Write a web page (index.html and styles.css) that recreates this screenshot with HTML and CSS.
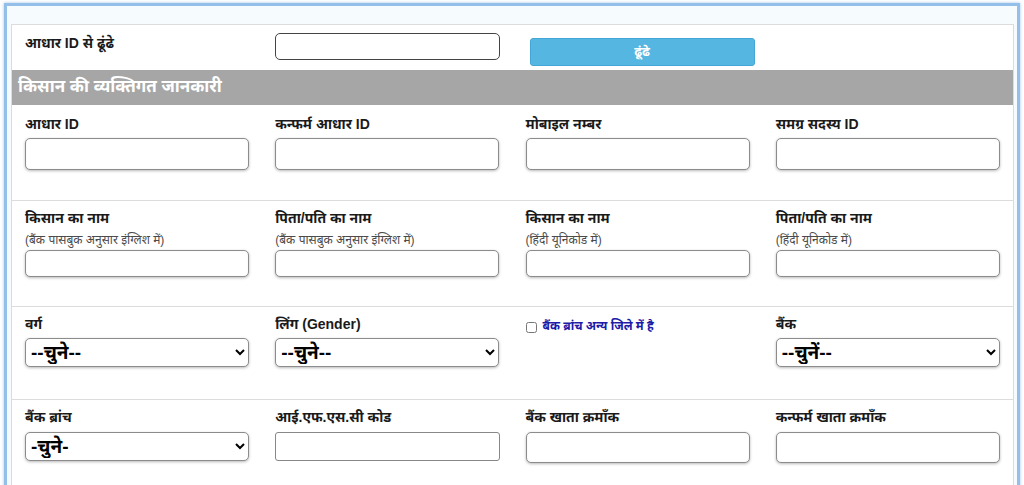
FILE: index.html
```html
<!DOCTYPE html>
<html lang="hi">
<head>
<meta charset="utf-8">
<title>किसान पंजीकरण</title>
<link rel="stylesheet" href="styles.css">
</head>
<body>
<div class="frame">
  <div class="sheet">
    <div class="row row-search">
      <div class="cell"><div class="label">आधार ID से ढूंढे</div></div>
      <div class="cell"><input class="plain search-input" type="text"></div>
      <div class="cell"><button class="btn" type="button">ढूंढे</button></div>
      <div class="cell"></div>
    </div>
    <div class="section-head">किसान की व्यक्तिगत जानकारी</div>
    <div class="row row-a">
      <div class="cell"><div class="label">आधार ID</div><input class="field tall" type="text"></div>
      <div class="cell"><div class="label">कन्फर्म आधार ID</div><input class="field tall" type="text"></div>
      <div class="cell"><div class="label">मोबाइल नम्बर</div><input class="field tall" type="text"></div>
      <div class="cell"><div class="label">समग्र सदस्य ID</div><input class="field tall" type="text"></div>
    </div>
    <div class="row row-b">
      <div class="cell"><div class="label">किसान का नाम</div><div class="sub">(बैंक पासबुक अनुसार इंग्लिश में)</div><input class="field short" type="text"></div>
      <div class="cell"><div class="label">पिता/पति का नाम</div><div class="sub">(बैंक पासबुक अनुसार इंग्लिश में)</div><input class="field short" type="text"></div>
      <div class="cell"><div class="label">किसान का नाम</div><div class="sub">(हिंदी यूनिकोड में)</div><input class="field short" type="text"></div>
      <div class="cell"><div class="label">पिता/पति का नाम</div><div class="sub">(हिंदी यूनिकोड में)</div><input class="field short" type="text"></div>
    </div>
    <div class="row row-c">
      <div class="cell"><div class="label">वर्ग</div><select class="pick"><option>--चुने--</option></select></div>
      <div class="cell"><div class="label">लिंग (Gender)</div><select class="pick"><option>--चुने--</option></select></div>
      <div class="cell"><label class="check"><input type="checkbox" class="box"><span>बैंक ब्रांच अन्य जिले में है</span></label></div>
      <div class="cell"><div class="label">बैंक</div><select class="pick"><option>--चुनें--</option></select></div>
    </div>
    <div class="row row-d">
      <div class="cell"><div class="label">बैंक ब्रांच</div><select class="pick"><option>-चुने-</option></select></div>
      <div class="cell"><div class="label">आई.एफ.एस.सी कोड</div><input class="plain ifsc" type="text"></div>
      <div class="cell"><div class="label">बैंक खाता क्रमाँक</div><input class="field tall" type="text"></div>
      <div class="cell"><div class="label">कन्फर्म खाता क्रमाँक</div><input class="field tall" type="text"></div>
    </div>
  </div>
</div>
</body>
</html>
```
FILE: styles.css
```css
html, body {
  margin: 0;
  padding: 0;
  background: #ffffff;
  font-family: "Liberation Sans", "Noto Sans Devanagari", "Noto Sans", Arial, sans-serif;
  color: #111;
  overflow: hidden;
}

.frame {
  margin: 3px 4px 0 4px;
  border: 3px solid #93bfe9;
  border-bottom: none;
  box-shadow: 0 0 3px rgba(120, 170, 225, 0.7);
  background: #f6fbfe;
  padding: 18px 3px 0 4px;
  height: 600px;
}

.sheet {
  background: #fff;
  border: 1px solid #dcdcdc;
  border-bottom: none;
  min-height: 700px;
}

.row {
  display: grid;
  grid-template-columns: repeat(4, 1fr);
  border-top: 1px solid #dcdcdc;
}

.row-search { border-top: none; padding: 8px 0 9px; height: 28px; }
.row-a { border-top: none; padding: 9px 0 30px; }
.row-b { padding: 7px 0 29px; }
.row-c { padding: 7px 0 32px; }
.row-d { padding: 7px 0 40px; }

.cell {
  padding: 0 13px;
  min-width: 0;
}

.label {
  font-weight: bold;
  font-size: 14px;
  line-height: 20px;
  color: #1a1a1a;
  white-space: nowrap;
}

.sub {
  font-size: 12px;
  line-height: 16px;
  color: #4a4a4a;
  margin-top: 4px;
  white-space: nowrap;
}

.field {
  display: block;
  box-sizing: border-box;
  width: 224px;
  border: 1px solid #8c8c8c;
  border-radius: 5px;
  background: #fff;
  box-shadow: 0 1px 3px rgba(0, 0, 0, 0.28), inset 0 0 2px rgba(0, 0, 0, 0.06);
  margin: 4px 0 0;
  padding: 0 6px;
  font: 14px "Liberation Sans", sans-serif;
}

.tall { height: 32px; }
.short { height: 27px; margin-top: 2px; }
.row-d .tall { height: 31px; margin-top: 5px; }

.plain {
  display: block;
  box-sizing: border-box;
  width: 225px;
  height: 27px;
  border: 1px solid #444;
  border-radius: 5px;
  background: #fff;
  margin: 0;
  padding: 0 6px;
  font: 14px "Liberation Sans", sans-serif;
}

.ifsc {
  width: 225px;
  height: 29px;
  border: 1px solid #888;
  border-radius: 3px;
  margin-top: 5px;
}

.btn {
  display: block;
  box-sizing: border-box;
  width: 225px;
  height: 28px;
  margin: 5px 0 0 4px;
  border: 1px solid #44a6d6;
  border-radius: 3px;
  background: #55b6e2;
  color: #fff;
  font-weight: bold;
  font-size: 13px;
  font-family: "Liberation Sans", "Noto Sans Devanagari", sans-serif;
  padding: 0;
}

.section-head {
  background: #a6a6a6;
  color: #fff;
  font-weight: bold;
  font-size: 17px;
  height: 35px;
  line-height: 33px;
  padding-left: 6px;
}

.pick {
  display: block;
  box-sizing: border-box;
  width: 224px;
  height: 29px;
  margin-top: 4px;
  border: 1px solid #8c8c8c;
  border-radius: 5px;
  background: #fff;
  box-shadow: 0 1px 3px rgba(0, 0, 0, 0.28);
  font-family: "Liberation Sans", "Noto Sans Devanagari", sans-serif;
  font-weight: bold;
  font-size: 19px;
  color: #000;
  padding: 0 0 0 1px;
}

.row-d .pick { margin-top: 5px; }

.check {
  display: flex;
  align-items: center;
  gap: 6px;
  margin-top: 3px;
  height: 20px;
  font-size: 12px;
  font-weight: bold;
  color: #1c1ca8;
  white-space: nowrap;
}

.box {
  width: 11px;
  height: 11px;
  margin: 0;
}
```
